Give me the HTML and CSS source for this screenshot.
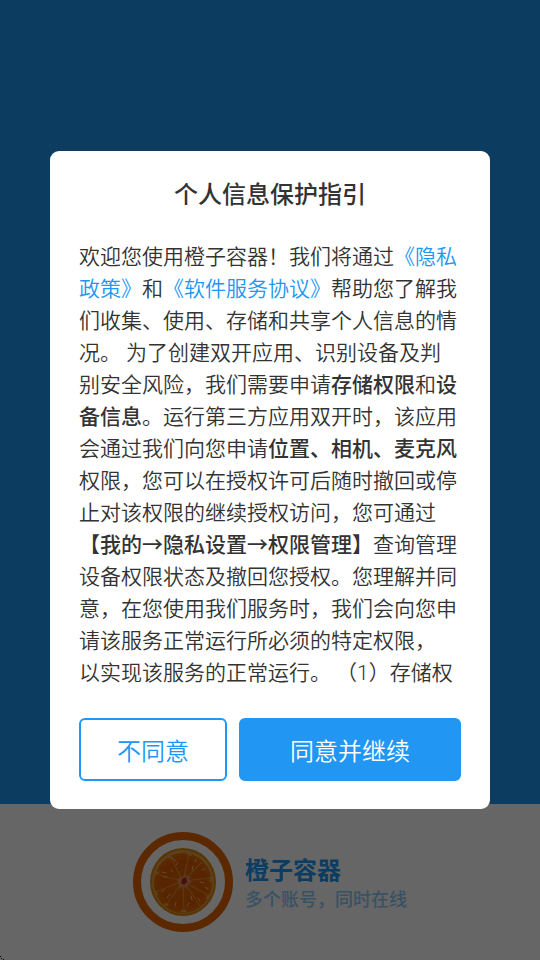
FILE: index.html
```
<!DOCTYPE html>
<html lang="zh-CN">
<head>
  <meta charset="UTF-8">
  <meta name="viewport" content="width=device-width, initial-scale=1">
  <title>橙子容器</title>
  <link rel="stylesheet" href="styles.css">
</head>
<body>

<div class="splash">
    <div class="splash-main"></div>
    <footer class="brand">
        <svg class="brand-logo" viewBox="0 0 100 100" aria-hidden="true">
            <defs>
                <radialGradient id="pulp">
                    <stop offset="0" stop-color="#e8ad79"/>
                    <stop offset=".2" stop-color="#d96208"/>
                    <stop offset=".75" stop-color="#dc5a00"/>
                    <stop offset="1" stop-color="#e06c00"/>
                </radialGradient>
            </defs>
            <circle cx="50" cy="50" r="46" fill="none" stroke="#e66400" stroke-width="8"/>
            <!-- peel and pith -->
            <ellipse cx="50" cy="50" rx="33" ry="34" fill="#dc8500"/>
            <ellipse cx="50" cy="50" rx="31" ry="32" fill="#e6a04a"/>
            <ellipse cx="50" cy="51" rx="29" ry="30" fill="url(#pulp)"/>
            <g fill="none" stroke="#e98b26" stroke-width="1.2" stroke-linecap="round">
                <path d="M50 49L37 24M50 49L56 22M50 49L69 30M50 49L78 46M50 49L76 64M50 49L67 74M50 49L51 80M50 49L33 73M50 49L23 60M50 49L22 42"/>
            </g>
            <g fill="none" stroke="#f2bb7d" stroke-width="1" stroke-linecap="round">
                <path d="M40 27l3 2M45 31l-2 2M63 27l-1 3M60 34l-1 4M69 38l3-1M29 40l4 1M31 45l3 0M67 50l4 1M72 55l3 2M31 58l-2 2M37 62l-3 4M58 64l1 4M65 66l2 3M43 70l-1 4M56 71l-2 3M38 38l2 2"/>
            </g>
            <path d="M22 43q2-4 4-2M35 26q3-3 4 1M54 22q3-1 4 2M77 45q2 2 0 5M76 63q-1 3-3 3M48 80q3-3 5 0M31 73q2-2 4 1M22 60q2 0 2 3" fill="none" stroke="#e6a04a" stroke-width="2"/>
            <path d="M44 48l3-3 3 1 2-4 2 3 4-1-2 4 3 2-4 2-1 4-4-2-4 3 1-5z" fill="#df8c68"/>
            <path d="M53 45l-4 2-1 4 3 2 3-3z" fill="#b32c08"/>
        </svg>
        <div class="brand-text">
            <strong class="brand-name">橙子容器</strong>
            <span class="brand-slogan">多个账号，同时在线</span>
        </div>
    </footer>
    <svg class="corner" viewBox="0 0 4 4" shape-rendering="crispEdges" aria-hidden="true">
        <path d="M0 2h1v1h1v1H0z" fill="#fff"/>
        <path d="M0 0h1v1H0zM1 2h1v1H1zM3 3h1v1H3z" fill="#000"/>
    </svg>
</div>

<div class="mask">
    <div class="dialog" role="dialog" aria-modal="true" aria-labelledby="dialog-title">
        <h1 class="dialog-title" id="dialog-title">个人信息保护指引</h1>
        <p class="dialog-body">欢迎您使用橙子容器！我们将通过<a href="#privacy">《隐私政策》</a>和<a href="#terms">《软件服务协议》</a>帮助您了解我们收集、使用、存储和共享个人信息的情况。 为了创建双开应用、识别设备及判别安全风险，我们需要申请<b>存储权限</b>和<b>设备信息</b>。运行第三方应用双开时，该应用会通过我们向您申请<b>位置、相机、麦克风</b>权限，您可以在授权许可后随时撤回或停止对该权限的继续授权访问，您可通过<b>【我的→隐私设置→权限管理】</b>查询管理设备权限状态及撤回您授权。您理解并同意，在您使用我们服务时，我们会向您申请该服务正常运行所必须的特定权限，<br>以实现该服务的正常运行。 （1）存储权</p>
        <div class="dialog-actions">
            <button class="btn btn-outline" type="button">不同意</button>
            <button class="btn btn-primary" type="button">同意并继续</button>
        </div>
    </div>
</div>

</body>
</html>
```

FILE: styles.css
```
:root {
    --primary: #2196f3;
    --text-color: #333;
    --brand-sub: #90caf9;
}

* {
    margin: 0;
    padding: 0;
    box-sizing: border-box;
}

body {
    font-family: Roboto, "Noto Sans CJK SC", sans-serif;
    color: var(--text-color);
}

.splash {
    position: relative;
    display: flex;
    flex-direction: column;
    min-height: 100vh;
    background: #fff;
}

.splash-main {
    flex: 1;
    background: var(--primary);
}

.brand {
    display: flex;
    align-items: center;
    justify-content: center;
    gap: 12px;
    padding: 28px 0;
}

.brand-logo {
    width: 100px;
    height: 100px;
}

.brand-text {
    display: flex;
    flex-direction: column;
    padding-top: 4px;
}

.brand-name {
    font-size: 24px;
    line-height: 32px;
    font-weight: 700;
    color: var(--primary);
}

.brand-slogan {
    font-size: 18px;
    line-height: 26px;
    font-weight: 500;
    color: var(--brand-sub);
}

.corner {
    position: absolute;
    left: 0;
    bottom: 0;
    width: 4px;
    height: 4px;
}

.mask {
    position: fixed;
    inset: 0;
    display: flex;
    align-items: center;
    justify-content: center;
    padding: 0 50px;
    background: rgba(0, 0, 0, 0.6);
}

.dialog {
    width: 100%;
    max-width: 480px;
    padding: 28px 29px;
    background: #fff;
    border-radius: 9px;
}

.dialog-title {
    margin-bottom: 30px;
    font-size: 24px;
    line-height: 32px;
    font-weight: 500;
    text-align: center;
}

.dialog-body {
    max-height: 448px;
    margin-bottom: 29px;
    overflow-y: auto;
    scrollbar-width: none;
    font-size: 21px;
    line-height: 32px;
    font-weight: 350;
}

.dialog-body a {
    color: var(--primary);
    text-decoration: none;
}

.dialog-body b {
    font-weight: 500;
}

.dialog-actions {
    display: grid;
    grid-template-columns: 2fr 3fr;
    gap: 12px;
}

.btn {
    height: 63px;
    border: 2px solid var(--primary);
    border-radius: 6px;
    font-family: inherit;
    font-size: 24px;
    font-weight: 350;
    cursor: pointer;
}

.btn-outline {
    background: #fff;
    color: var(--primary);
}

.btn-primary {
    background: var(--primary);
    color: #fff;
}
```
